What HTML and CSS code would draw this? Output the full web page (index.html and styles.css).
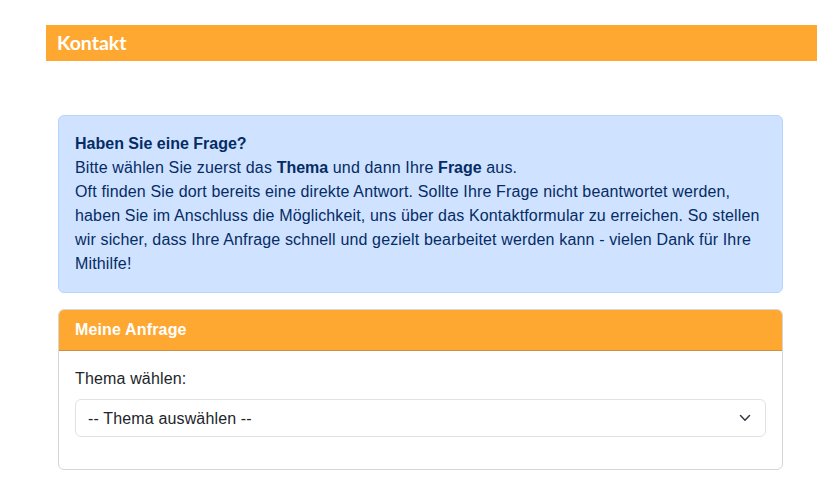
FILE: index.html
```html
<!DOCTYPE html>
<html lang="de">
<head>
    <meta charset="UTF-8">
    <meta name="viewport" content="width=device-width, initial-scale=1.0">
    <title>Kontakt</title>
    <link rel="stylesheet" href="styles.css">
</head>
<body>
    <div class="page">
        <h1 class="page-title">Kontakt</h1>
        <div class="content">
            <div class="alert">
                <strong>Haben Sie eine Frage?</strong><br>
                Bitte wählen Sie zuerst das <strong>Thema</strong> und dann Ihre <strong>Frage</strong> aus.<br>
                Oft finden Sie dort bereits eine direkte Antwort. Sollte Ihre Frage nicht beantwortet werden, haben Sie im Anschluss die Möglichkeit, uns über das Kontaktformular zu erreichen. So stellen wir sicher, dass Ihre Anfrage schnell und gezielt bearbeitet werden kann - vielen Dank für Ihre Mithilfe!
            </div>
            <div class="card">
                <div class="card-header">Meine Anfrage</div>
                <div class="card-body">
                    <label for="thema" class="form-label">Thema wählen:</label>
                    <div class="select-wrap">
                        <select id="thema" name="thema" class="form-select">
                            <option value="">-- Thema auswählen --</option>
                        </select>
                        <svg class="chevron" width="12" height="8" viewBox="0 0 12 8"><path d="M1.5 1.5 6 6.2l4.5-4.7" fill="none" stroke="#343a40" stroke-width="1.5" stroke-linecap="round" stroke-linejoin="round"/></svg>
                    </div>
                </div>
            </div>
        </div>
    </div>
</body>
</html>
```

FILE: styles.css
```css
body {
    font-family: "Liberation Sans", Arial, sans-serif;
    font-size: 16px;
    line-height: 24px;
    letter-spacing: 0.15px;
    color: #212529;
    background: #fff;
    margin: 0;
    padding: 0;
}
.page {
    padding: 25px 0 0 46px;
}
.page-title {
    font-family: Lato, "Liberation Sans", sans-serif;
    font-weight: 700;
    font-size: 19.5px;
    letter-spacing: 0;
    line-height: 36px;
    height: 36px;
    margin: 0;
    padding-left: 11px;
    background-color: #fea832;
    color: #fff;
}
.content {
    padding: 54px 34px 0 12px;
}
.alert {
    background-color: #cfe2ff;
    border: 1px solid #b6d4fe;
    color: #052c65;
    border-radius: 6px;
    padding: 16px;
}
.alert strong {
    font-weight: 700;
    letter-spacing: 0;
}
.card {
    margin-top: 16px;
    border: 1px solid #d6d6d6;
    border-radius: 6px;
    overflow: hidden;
}
.card-header {
    background-color: #fea832;
    color: #fff;
    font-weight: 700;
    padding: 8px 16px;
    border-bottom: 1px solid #c7924a;
}
.card-body {
    padding: 16px;
}
.form-label {
    display: block;
    margin-bottom: 8px;
}
.select-wrap {
    position: relative;
    margin-bottom: 16px;
}
.form-select {
    display: block;
    width: 100%;
    height: 38px;
    padding: 0 36px 0 12px;
    font-family: inherit;
    font-size: 16px;
    letter-spacing: 0.15px;
    color: #212529;
    background: #fff;
    border: 1px solid #dee2e6;
    border-radius: 6px;
    appearance: none;
    -webkit-appearance: none;
}
.chevron {
    position: absolute;
    right: 15px;
    top: 15px;
    pointer-events: none;
}
```
